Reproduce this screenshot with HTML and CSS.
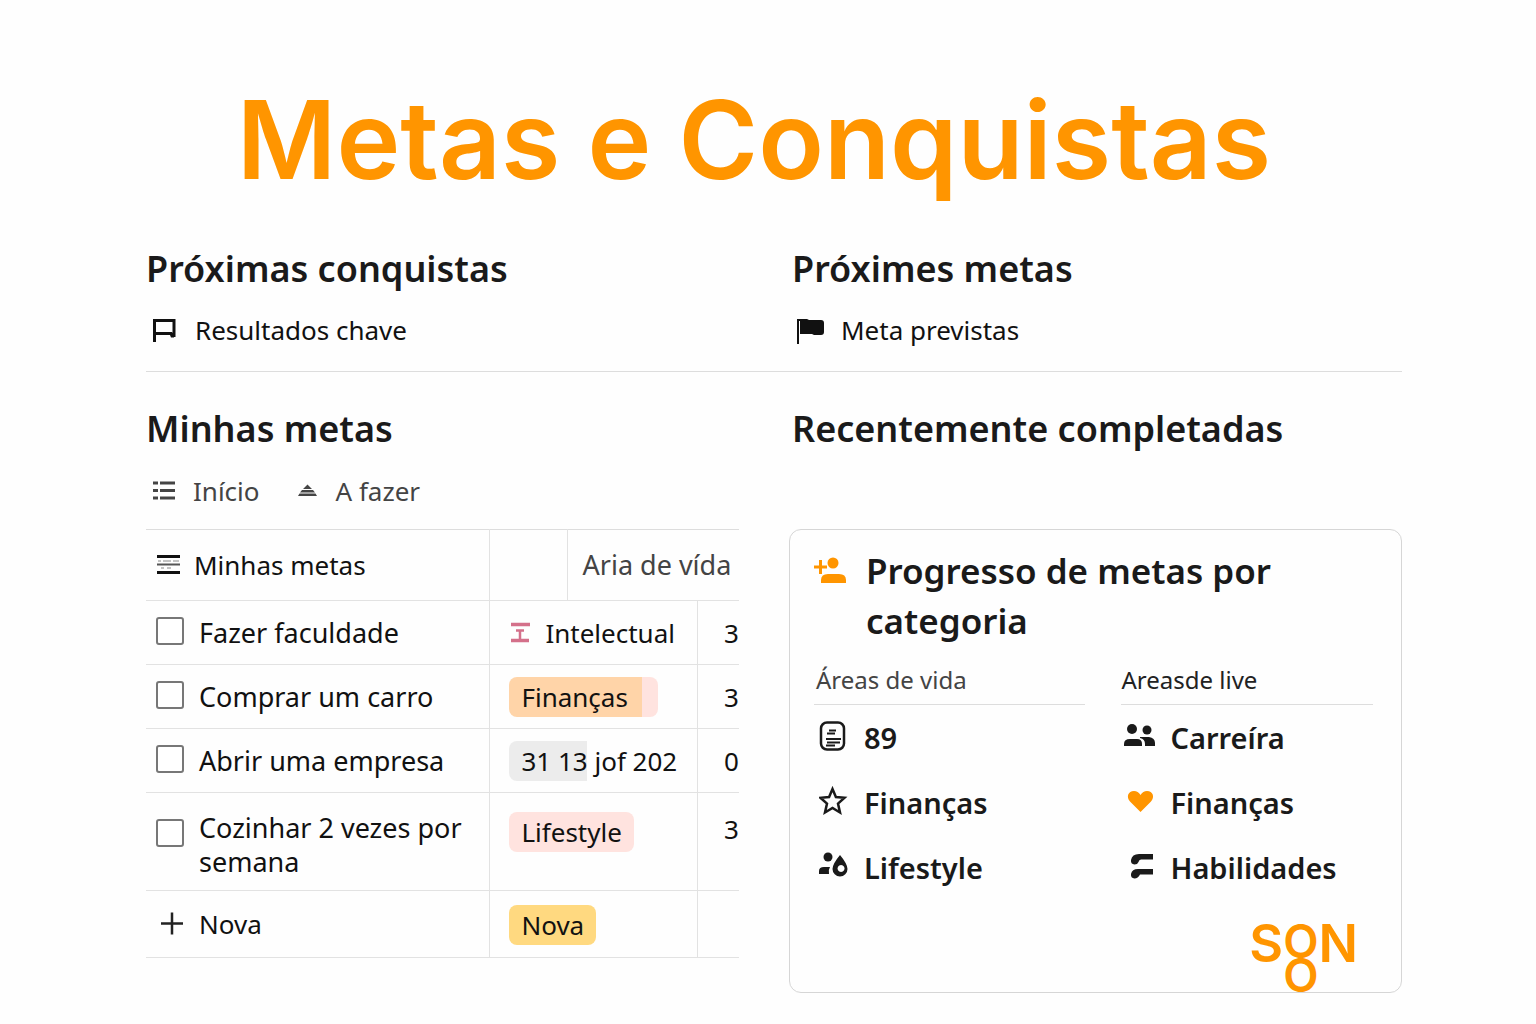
FILE: index.html
```html
<!DOCTYPE html>
<html lang="pt">
<head>
  <meta charset="UTF-8">
  <meta name="viewport" content="width=device-width, initial-scale=1.0">
  <title>Metas e Conquistas</title>
  <link rel="stylesheet" href="styles.css">
</head>
<body>
  <main class="page">
    <h1>Metas e Conquistas</h1>

    <div class="columns summary">
      <section>
        <h2>Próximas conquistas</h2>
        <a class="link" href="#resultados">
          <svg class="icon" viewBox="0 0 30 30"><path d="M3.500 27V5.500H23V22M3.500 18.500H20L21 21H23" fill="none" stroke="currentColor" stroke-width="3"/></svg>
          Resultados chave
        </a>
      </section>
      <section class="inset">
        <h2>Próximes metas</h2>
        <a class="link" href="#previstas">
          <svg class="icon" viewBox="0 0 30 30"><path d="M0 29V4h10l2 1h12q3 0 3 3v9q0 3-3 3h-7l-2-1H2v10z" fill="currentColor"/><path d="M2.500 6v14" stroke="#fff"/></svg>
          Meta previstas
        </a>
      </section>
    </div>

    <div class="columns">
      <section>
        <h2>Minhas metas</h2>
        <nav class="tabs">
          <button type="button">
            <svg class="icon" viewBox="0 0 30 30"><path d="M2 7h5M9 7h15M2 14.500h5M9 14.500h15M2 22h5M9 22h15" stroke="currentColor" stroke-width="3"/></svg>
            Início
          </button>
          <button type="button">
            <svg class="icon" viewBox="0 0 30 30"><path d="M13.500 8.500L18 13H9zM8 14h11l2 2.500H6zM5.500 17.500h16l1.500 2.500H4z" fill="currentColor"/></svg>
            A fazer
          </button>
        </nav>

        <table class="goals">
          <colgroup>
            <col class="col-name"><col class="col-gap"><col class="col-area"><col>
          </colgroup>
          <thead>
            <tr>
              <th>
                <span class="cell">
                  <svg class="icon" viewBox="0 0 30 30"><path d="M3 6.500h23M3 22.500h23" stroke="#111" stroke-width="3"/><path d="M3 14.500h23" stroke="#555" stroke-width="2"/><path d="M4 11h3m2 0h8m2 0h6M7 18h3m3 0h4" stroke="#888"/></svg>
                  Minhas metas
                </span>
              </th>
              <th></th>
              <th colspan="2" class="area">Aria de vída</th>
            </tr>
          </thead>
          <tbody>
            <tr>
              <td><label class="cell"><input type="checkbox">Fazer faculdade</label></td>
              <td colspan="2">
                <span class="plain">
                  <svg class="mark" viewBox="0 0 22 24"><path d="M2 3.500h19M2 19.500h18" stroke="#d4708a" stroke-width="3.500"/><path d="M7 9.500h8M11 9v9" stroke="#d4708a" stroke-width="2.500"/></svg>
                  Intelectual
                </span>
              </td>
              <td class="num">3</td>
            </tr>
            <tr>
              <td><label class="cell"><input type="checkbox">Comprar um carro</label></td>
              <td colspan="2"><span class="tag tag-orange">Finanças</span></td>
              <td class="num">3</td>
            </tr>
            <tr>
              <td><label class="cell"><input type="checkbox">Abrir uma empresa</label></td>
              <td colspan="2"><span class="tag tag-grey">31 13 jof 202</span></td>
              <td class="num">0</td>
            </tr>
            <tr class="tall">
              <td><label class="cell"><input type="checkbox">Cozinhar 2 vezes por semana</label></td>
              <td colspan="2"><span class="tag tag-pink">Lifestyle</span></td>
              <td class="num">3</td>
            </tr>
            <tr>
              <td>
                <button type="button" class="cell add">
                  <svg class="plus" viewBox="0 0 28 28"><path d="M5 13.500h22M16 2.500v22" stroke="#222" stroke-width="2.500"/></svg>
                  Nova
                </button>
              </td>
              <td colspan="2"><span class="tag tag-yellow">Nova</span></td>
              <td></td>
            </tr>
          </tbody>
        </table>
      </section>

      <section class="done">
        <h2>Recentemente completadas</h2>
        <article class="card">
          <header class="card-head">
            <svg class="person" viewBox="0 0 34 30"><g fill="#ff9500"><circle cx="19" cy="7" r="5.500"/><path d="M7 27v-3q0-6 7-6h11q7 0 7 6v3z"/><path d="M5 4h3v5.500h5v3H8V18H5v-5.500H0v-3h5z"/></g></svg>
            <h3>Progresso de metas por categoria</h3>
          </header>
          <div class="lists">
            <div>
              <h4>Áreas de vida</h4>
              <ul>
                <li>
                  <svg class="icon" viewBox="0 0 30 30"><rect x="2" y="1.500" width="23" height="27" rx="6" fill="none" stroke="currentColor" stroke-width="2.500"/><path d="M10 9.500h7M8 12.500h8" stroke="currentColor" stroke-width="2"/><path d="M7 18h15M8 21.500h13M7 24.500h9" stroke="currentColor" stroke-width="2"/></svg>
                  89
                </li>
                <li>
                  <svg class="icon" viewBox="0 0 30 30"><path d="M13.500 3l3.400 8 8.600.800-6.500 5.800 2 8.900-7.500-4.600-7.500 4.600 2-8.900-6.500-5.800 8.600-.8z" fill="none" stroke="currentColor" stroke-width="2.500"/></svg>
                  Finanças
                </li>
                <li>
                  <svg class="icon" viewBox="0 0 30 30"><g fill="currentColor"><circle cx="9" cy="6" r="4.500"/><path d="M0 23v-3q0-4 5-4h6q-2 3-1 7z"/><path fill-rule="evenodd" d="M21 4q7.500 9 7.500 14a7.500 7.500 0 0 1-15 0q0-5 7.500-14zm1 10a3.500 3.500 0 1 0 .1 0z"/></g></svg>
                  Lifestyle
                </li>
              </ul>
            </div>
            <div>
              <h4 class="dark">Areasde live</h4>
              <ul>
                <li>
                  <svg class="people" viewBox="0 0 34 30"><g fill="currentColor"><circle cx="11" cy="8" r="5"/><circle cx="26" cy="9" r="4.500"/><path d="M3 25v-2q0-5 6-5h7q5 0 5 5v2z"/><path d="M19 16h9q6 1 6 6v3H24v-2q0-5-5-6z"/></g></svg>
                  Carreíra
                </li>
                <li>
                  <svg class="people" viewBox="0 0 34 30"><path d="M19.500 26L9 15.500C5 11 7 5 13 5q4 0 6.500 4Q22 5 26 5c6 0 8 6 4 10.500z" fill="#ff9500"/></svg>
                  Finanças
                </li>
                <li>
                  <svg class="people" viewBox="0 0 34 30"><path d="M32 3v5.500H20q-2 0-2.500 2.500-1 2.500-4 2.500-4-.5-3.500-4.500 1-6 8-6zM32 18v5.500H19q-2 4-5.500 4-4-.5-3.500-4.500 1-5 7-5z" fill="currentColor"/></svg>
                  Habilidades
                </li>
              </ul>
            </div>
          </div>
          <div class="logo"><span>S</span><span class="stack"><span>O</span><span>O</span></span><span>N</span></div>
        </article>
      </section>
    </div>
  </main>
</body>
</html>
```
FILE: styles.css
```css
* {
  box-sizing: border-box;
}

body {
  margin: 0;
  background: #fefefe;
  color: #111;
  font-family: "Noto Sans", "Open Sans", sans-serif;
  font-size: 26px;
  line-height: 36px;
}

h1, h2, h3, h4, ul {
  margin: 0;
  padding: 0;
  font-weight: 600;
}

.page {
  padding: 80px 134px 30px 146px;
}

h1 {
  margin-right: 40px;
  color: #ff9500;
  font-family: Inter, sans-serif;
  font-size: 108px;
  line-height: 120px;
  text-align: center;
  white-space: nowrap;
}

h2 {
  font-size: 36px;
  line-height: 48px;
  color: #1a1a1a;
  white-space: nowrap;
}

.columns {
  display: grid;
  grid-template-columns: 593fr 613fr;
  column-gap: 50px;
}

.summary {
  margin: 45px 0 33px;
  padding-bottom: 23px;
  border-bottom: 1px solid #ddd;
}

.inset {
  padding-left: 3px;
}

.link {
  display: flex;
  align-items: center;
  gap: 14px;
  margin-top: 19px;
  padding-left: 5px;
  color: inherit;
  text-decoration: none;
}

.icon {
  flex: none;
  width: 30px;
  height: 30px;
}

/* Tabs */
.tabs {
  display: flex;
  gap: 34px;
  padding: 20px 0 20px 5px;
}

button {
  display: flex;
  align-items: center;
  gap: 12px;
  padding: 0;
  border: none;
  background: none;
  color: #444;
  font: inherit;
  cursor: pointer;
}

/* Goals table */
.goals {
  width: 100%;
  border-collapse: collapse;
  table-layout: fixed;
  border-top: 1px solid #ddd;
}

.col-name {
  width: 58%;
}

.col-gap {
  width: 13%;
}

.col-area {
  width: 22%;
}

th, td {
  height: 64px;
  padding: 0;
  border-bottom: 1px solid #e2e2e2;
  border-left: 1px solid #e2e2e2;
  font-weight: 400;
  text-align: left;
  white-space: nowrap;
}

th {
  height: 71px;
}

.tall td {
  height: 98px;
  padding-top: 18px;
  vertical-align: top;
}

tr:last-child td {
  height: 67px;
}

th:first-child, td:first-child {
  border-left: none;
  white-space: normal;
}

.area {
  padding-left: 15px;
  color: #444;
  font-size: 27px;
}

.cell {
  display: flex;
  align-items: center;
  gap: 15px;
  padding-left: 10px;
}

label {
  font-size: 27px;
}

.tall .cell {
  align-items: flex-start;
  line-height: 34px;
}

.tall input {
  margin-top: 8px;
}

th .cell {
  gap: 10px;
  padding-left: 8px;
}

.add {
  color: #111;
}

.plus {
  flex: none;
  width: 28px;
  height: 28px;
}

input {
  appearance: none;
  flex: none;
  width: 28px;
  height: 28px;
  margin: 0 0 4px;
  border: 2px solid #777;
  border-radius: 3px;
  background: #fff;
}

input:checked {
  background: #ff9500;
}

.num {
  padding-left: 26px;
}

.plain {
  display: flex;
  align-items: center;
  gap: 14px;
  padding-left: 19px;
}

.mark {
  width: 22px;
  height: 24px;
}

.tag {
  display: inline-block;
  margin-left: 19px;
  padding: 2px 12px;
  border-radius: 8px;
  vertical-align: middle;
}

.tag-orange {
  padding-right: 30px;
  background: linear-gradient(to left, #ffe3df 16px, #ffd4a8 16px);
}

.tag-grey {
  padding-right: 0;
  background: linear-gradient(to right, #ececec 78px, transparent 78px);
}

.tag-pink {
  background: #ffe3df;
}

.tag-yellow {
  background: #ffd980;
}

/* Progress card */
.done {
  display: flex;
  flex-direction: column;
}

.done h2 {
  padding-left: 3px;
}

.card {
  display: flex;
  flex-direction: column;
  margin-top: 76px;
  padding: 16px 28px 0 24px;
  border: 1px solid #d6d6d6;
  border-radius: 12px;
}

.card-head {
  display: flex;
  gap: 18px;
}

.person {
  flex: none;
  width: 34px;
  height: 30px;
  margin-top: 10px;
}

h3 {
  color: #1a1a1a;
  font-size: 35px;
  line-height: 50px;
}

.lists {
  display: grid;
  grid-template-columns: 272fr 252fr;
  column-gap: 36px;
  margin-top: 16px;
}

h4 {
  padding: 0 0 6px 2px;
  border-bottom: 1px solid #ddd;
  color: #444;
  font-size: 24px;
  font-weight: 400;
}

.dark {
  padding-left: 0;
  color: #222;
}

li {
  display: flex;
  align-items: center;
  gap: 15px;
  height: 65px;
  padding-left: 5px;
  color: #1a1a1a;
  font-size: 29px;
}

li svg {
  margin-bottom: 4px;
}

.people {
  flex: none;
  width: 34px;
  height: 30px;
}

.dark + ul li {
  padding-left: 0;
}

.logo {
  display: flex;
  align-self: flex-end;
  margin: 24px 15px 0 0;
  color: #ff9500;
  font-family: Inter, sans-serif;
  font-size: 52px;
  font-weight: 600;
  line-height: 40px;
}

.stack {
  display: flex;
  flex-direction: column;
  font-size: 46px;
  line-height: 34px;
}
```
